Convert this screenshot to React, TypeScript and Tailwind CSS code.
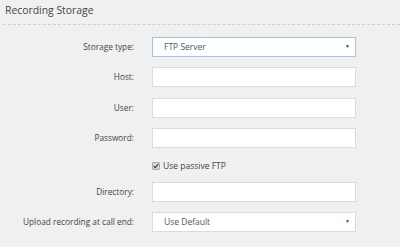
const font = { fontFamily: '"Open Sans", "Liberation Sans", sans-serif' }

function Field({ label, children, className = '' }: { label: string; children: React.ReactNode; className?: string }) {
  return (
    <div className={`flex items-center h-[20px] ${className}`}>
      <div className="w-[135px] text-right text-[8.3px] text-[#444] pr-[1px]">{label}</div>
      <div className="ml-[17px] w-[204px]">{children}</div>
    </div>
  )
}

function TextBox() {
  return <div className="h-[20px] w-full bg-white border border-[#dcdcdc]" />
}

function Select({ value, focused = false }: { value: string; focused?: boolean }) {
  return (
    <div
      className={`h-[20px] w-full bg-white border flex items-center justify-between pl-[11px] pr-[5px] text-[8.5px] text-[#555] ${
        focused ? 'border-[#9ec5ec]' : 'border-[#dcdcdc]'
      }`}
    >
      <span>{value}</span>
      <span className="text-[5px] text-[#444]">▼</span>
    </div>
  )
}

export default function App() {
  return (
    <div className="w-[400px] h-[247px] bg-[#f0f0f0] overflow-hidden" style={font}>
      <div className="pl-[5px] pt-[3px] h-[24px] text-[10.4px] text-[#444]">Recording Storage</div>
      <div className="ml-[3px] border-t border-dashed border-[#cfcfcf]" />
      <div className="pt-[12px]">
        <Field label="Storage type:">
          <Select value="FTP Server" focused />
        </Field>
        <Field label="Host:" className="mt-[10px]">
          <TextBox />
        </Field>
        <Field label="User:" className="mt-[11px]">
          <TextBox />
        </Field>
        <Field label="Password:" className="mt-[10px]">
          <TextBox />
        </Field>
        <div className="flex items-center h-[34px] pl-[152px] pt-[2px]">
          <span className="w-[8px] h-[8px] bg-[#d8d8d8] border border-[#aaa] rounded-[1px] flex items-center justify-center">
            <svg viewBox="0 0 8 8" className="w-[6px] h-[6px]">
              <path d="M1 4.2 L3 6.2 L7 1.5" stroke="#333" strokeWidth="1.4" fill="none" />
            </svg>
          </span>
          <span className="ml-[3px] text-[8.5px] text-[#444]">Use passive FTP</span>
        </div>
        <Field label="Directory:">
          <TextBox />
        </Field>
        <Field label="Upload recording at call end:" className="mt-[10px]">
          <Select value="Use Default" />
        </Field>
      </div>
    </div>
  )
}
